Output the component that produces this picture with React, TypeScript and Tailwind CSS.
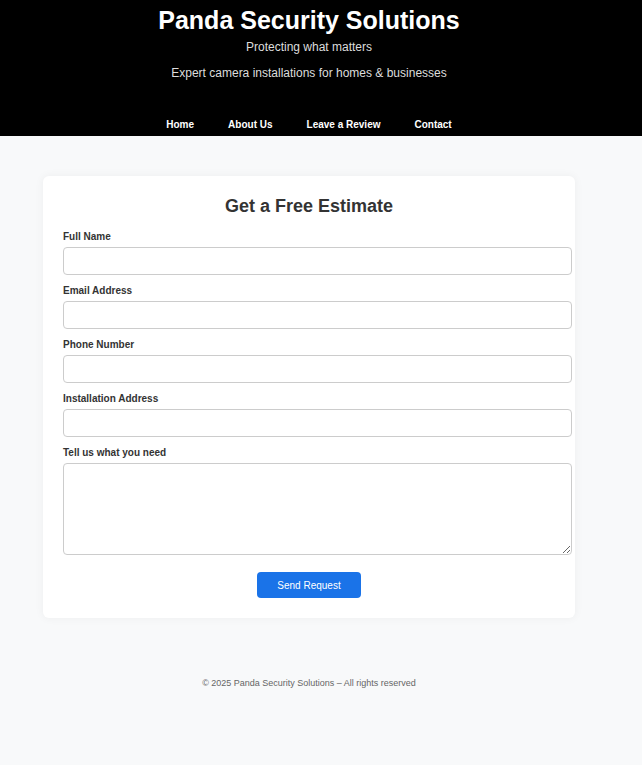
import React from "react"

const navLinks = ["Home", "About Us", "Leave a Review", "Contact"]

const fields = [
  { id: "name", label: "Full Name", type: "text" },
  { id: "email", label: "Email Address", type: "email" },
  { id: "phone", label: "Phone Number", type: "tel" },
  { id: "address", label: "Installation Address", type: "text" },
]

export default function App() {
  return (
    <div className="min-h-screen bg-[#f8f9fa] font-['Liberation_Sans',Arial,sans-serif]">
      {/* Header */}
      <header className="bg-black">
        <div className="w-[618px] text-center pt-[6px] pb-[5px]">
          <h1 className="text-[25px] leading-[29px] font-bold text-white">Panda Security Solutions</h1>
          <p className="mt-[5px] text-[12px] leading-[14px] text-[#dddddd]">Protecting what matters</p>
          <p className="mt-[12px] text-[12px] leading-[14px] text-[#dddddd]">
            Expert camera installations for homes &amp; businesses
          </p>
          <nav className="mt-[39px] flex justify-center gap-[34px]">
            {navLinks.map((link) => (
              <a key={link} href="#" className="text-[10px] leading-[12px] font-bold text-white">
                {link}
              </a>
            ))}
          </nav>
        </div>
      </header>

      {/* Estimate form */}
      <main className="w-[618px] pt-[40px]">
        <div className="mx-auto w-[532px] bg-white rounded-[6px] p-[20px] shadow-[0_0_10px_rgba(0,0,0,0.05)]">
          <h2 className="text-center text-[18px] leading-[21px] font-bold text-[#333333]">Get a Free Estimate</h2>
          <form className="mt-[14px]" onSubmit={(e) => e.preventDefault()}>
            {fields.map((f) => (
              <div key={f.id}>
                <label htmlFor={f.id} className="block mb-[4px] text-[10px] leading-[12px] font-bold text-[#333333]">
                  {f.label}
                </label>
                <input
                  id={f.id}
                  type={f.type}
                  className="box-content block w-full h-[16px] pl-[8px] pr-[7px] py-[5px] mb-[10px] border border-[#cccccc] rounded-[4px] bg-white text-[12px]"
                />
              </div>
            ))}
            <label htmlFor="needs" className="block mb-[4px] text-[10px] leading-[12px] font-bold text-[#333333]">
              Tell us what you need
            </label>
            <textarea
              id="needs"
              className="box-content block w-full h-[80px] pl-[8px] pr-[7px] py-[5px] border border-[#cccccc] rounded-[4px] bg-white text-[12px]"
            />
            <div className="mt-[17px] flex justify-center">
              <button
                type="submit"
                className="w-[104px] h-[26px] rounded-[4px] bg-[#1a73e8] text-white text-[10px]"
              >
                Send Request
              </button>
            </div>
          </form>
        </div>
      </main>

      <footer className="w-[618px] pt-[60px] pb-[40px] text-center text-[9px] leading-[10px] text-[#666666]">
        © 2025 Panda Security Solutions – All rights reserved
      </footer>
    </div>
  )
}
